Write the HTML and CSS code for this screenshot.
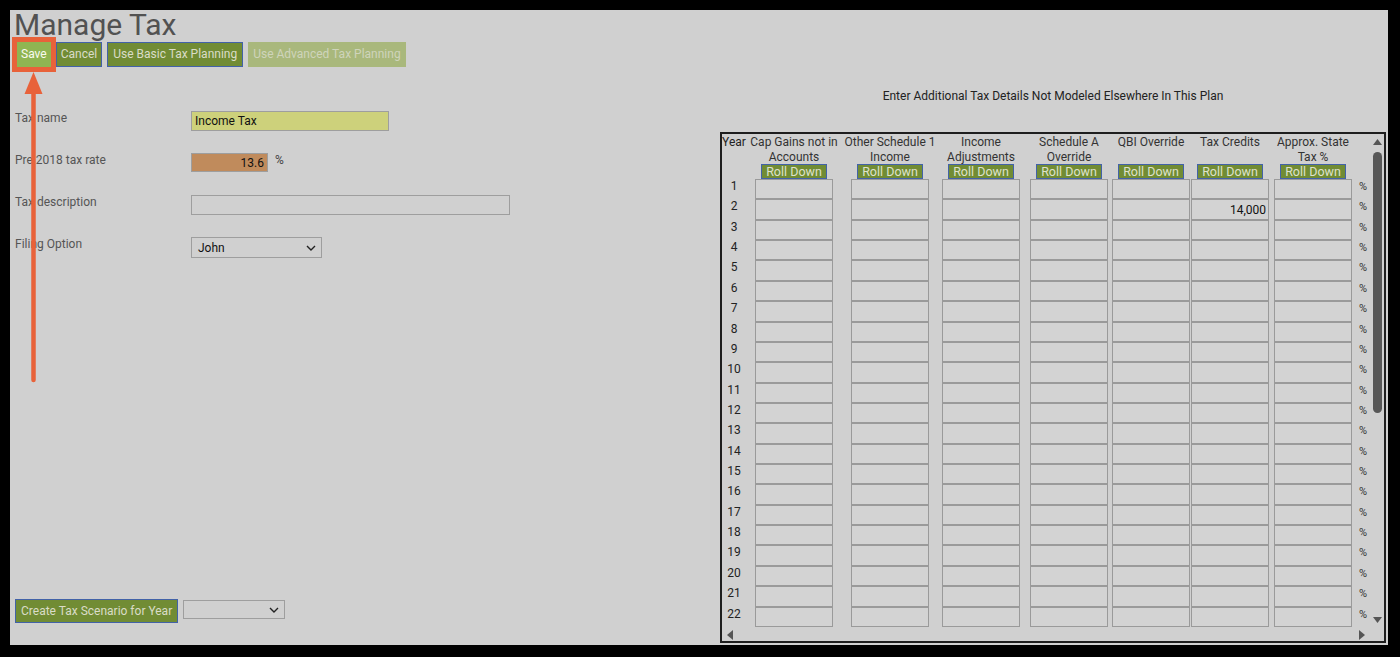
FILE: index.html
```html
<!DOCTYPE html>
<html lang="en">
<head>
<meta charset="utf-8">
<title>Manage Tax</title>
<link rel="stylesheet" href="styles.css">
</head>
<body>
<div class="page">
  <h1 class="title">Manage Tax</h1>
  <div class="toolbar">
    <button class="btn btn-save">Save</button>
    <button class="btn">Cancel</button>
    <button class="btn btn-wide">Use Basic Tax Planning</button>
    <button class="btn btn-disabled">Use Advanced Tax Planning</button>
  </div>
  <div class="main">
    <div class="left">
      <div class="form">
        <div class="lbl">Tax name</div>
        <div class="field"><input class="inp inp-name" value="Income Tax"></div>
        <div class="lbl">Pre 2018 tax rate</div>
        <div class="field"><input class="inp inp-rate" value="13.6"><span class="unit">%</span></div>
        <div class="lbl">Tax description</div>
        <div class="field"><input class="inp inp-desc" value=""></div>
        <div class="lbl">Filing Option</div>
        <div class="field"><div class="sel sel-filing"><span>John</span><svg class="chev" viewBox="0 0 10 6" width="10" height="6"><path d="M1 1 L5 5 L9 1" fill="none" stroke="#222" stroke-width="1.4"/></svg></div></div>
      </div>
      <div class="create-row">
        <button class="btn btn-wide btn-create">Create Tax Scenario for Year</button>
        <div class="sel sel-year"><span></span><svg class="chev" viewBox="0 0 10 6" width="10" height="6"><path d="M1 1 L5 5 L9 1" fill="none" stroke="#222" stroke-width="1.4"/></svg></div>
      </div>
    </div>
    <div class="right">
      <div class="heading">Enter Additional Tax Details Not Modeled Elsewhere In This Plan</div>
      <div class="gridbox">
        <div class="viewport">
          <table class="tbl">
            <colgroup>
              <col class="w-yr"><col class="w-c1"><col class="w-c2"><col class="w-c3"><col class="w-c4"><col class="w-c5"><col class="w-c6"><col class="w-c7"><col class="w-pct">
            </colgroup>
            <thead>
              <tr>
                <th class="yr"><div class="yr-head">Year</div></th>
                <th class="c1"><div class="ch"><div class="ch-text">Cap Gains not in<br>Accounts</div><button class="roll">Roll Down</button></div></th>
                <th class="c2"><div class="ch"><div class="ch-text">Other Schedule 1<br>Income</div><button class="roll">Roll Down</button></div></th>
                <th class="c3"><div class="ch"><div class="ch-text">Income<br>Adjustments</div><button class="roll">Roll Down</button></div></th>
                <th class="c4"><div class="ch"><div class="ch-text">Schedule A<br>Override</div><button class="roll">Roll Down</button></div></th>
                <th class="c5"><div class="ch"><div class="ch-text">QBI Override</div><button class="roll">Roll Down</button></div></th>
                <th class="c6"><div class="ch"><div class="ch-text">Tax Credits</div><button class="roll">Roll Down</button></div></th>
                <th class="c7"><div class="ch"><div class="ch-text">Approx. State<br>Tax %</div><button class="roll">Roll Down</button></div></th>
                <th class="pct"></th>
              </tr>
            </thead>
            <tbody>
              <tr><td class="yr">1</td><td class="c1"><input class="cell"></td><td class="c2"><input class="cell"></td><td class="c3"><input class="cell"></td><td class="c4"><input class="cell"></td><td class="c5"><input class="cell"></td><td class="c6"><input class="cell"></td><td class="c7"><input class="cell"></td><td class="pct">%</td></tr>
              <tr><td class="yr">2</td><td class="c1"><input class="cell"></td><td class="c2"><input class="cell"></td><td class="c3"><input class="cell"></td><td class="c4"><input class="cell"></td><td class="c5"><input class="cell"></td><td class="c6"><input class="cell" value="14,000"></td><td class="c7"><input class="cell"></td><td class="pct">%</td></tr>
              <tr><td class="yr">3</td><td class="c1"><input class="cell"></td><td class="c2"><input class="cell"></td><td class="c3"><input class="cell"></td><td class="c4"><input class="cell"></td><td class="c5"><input class="cell"></td><td class="c6"><input class="cell"></td><td class="c7"><input class="cell"></td><td class="pct">%</td></tr>
              <tr><td class="yr">4</td><td class="c1"><input class="cell"></td><td class="c2"><input class="cell"></td><td class="c3"><input class="cell"></td><td class="c4"><input class="cell"></td><td class="c5"><input class="cell"></td><td class="c6"><input class="cell"></td><td class="c7"><input class="cell"></td><td class="pct">%</td></tr>
              <tr><td class="yr">5</td><td class="c1"><input class="cell"></td><td class="c2"><input class="cell"></td><td class="c3"><input class="cell"></td><td class="c4"><input class="cell"></td><td class="c5"><input class="cell"></td><td class="c6"><input class="cell"></td><td class="c7"><input class="cell"></td><td class="pct">%</td></tr>
              <tr><td class="yr">6</td><td class="c1"><input class="cell"></td><td class="c2"><input class="cell"></td><td class="c3"><input class="cell"></td><td class="c4"><input class="cell"></td><td class="c5"><input class="cell"></td><td class="c6"><input class="cell"></td><td class="c7"><input class="cell"></td><td class="pct">%</td></tr>
              <tr><td class="yr">7</td><td class="c1"><input class="cell"></td><td class="c2"><input class="cell"></td><td class="c3"><input class="cell"></td><td class="c4"><input class="cell"></td><td class="c5"><input class="cell"></td><td class="c6"><input class="cell"></td><td class="c7"><input class="cell"></td><td class="pct">%</td></tr>
              <tr><td class="yr">8</td><td class="c1"><input class="cell"></td><td class="c2"><input class="cell"></td><td class="c3"><input class="cell"></td><td class="c4"><input class="cell"></td><td class="c5"><input class="cell"></td><td class="c6"><input class="cell"></td><td class="c7"><input class="cell"></td><td class="pct">%</td></tr>
              <tr><td class="yr">9</td><td class="c1"><input class="cell"></td><td class="c2"><input class="cell"></td><td class="c3"><input class="cell"></td><td class="c4"><input class="cell"></td><td class="c5"><input class="cell"></td><td class="c6"><input class="cell"></td><td class="c7"><input class="cell"></td><td class="pct">%</td></tr>
              <tr><td class="yr">10</td><td class="c1"><input class="cell"></td><td class="c2"><input class="cell"></td><td class="c3"><input class="cell"></td><td class="c4"><input class="cell"></td><td class="c5"><input class="cell"></td><td class="c6"><input class="cell"></td><td class="c7"><input class="cell"></td><td class="pct">%</td></tr>
              <tr><td class="yr">11</td><td class="c1"><input class="cell"></td><td class="c2"><input class="cell"></td><td class="c3"><input class="cell"></td><td class="c4"><input class="cell"></td><td class="c5"><input class="cell"></td><td class="c6"><input class="cell"></td><td class="c7"><input class="cell"></td><td class="pct">%</td></tr>
              <tr><td class="yr">12</td><td class="c1"><input class="cell"></td><td class="c2"><input class="cell"></td><td class="c3"><input class="cell"></td><td class="c4"><input class="cell"></td><td class="c5"><input class="cell"></td><td class="c6"><input class="cell"></td><td class="c7"><input class="cell"></td><td class="pct">%</td></tr>
              <tr><td class="yr">13</td><td class="c1"><input class="cell"></td><td class="c2"><input class="cell"></td><td class="c3"><input class="cell"></td><td class="c4"><input class="cell"></td><td class="c5"><input class="cell"></td><td class="c6"><input class="cell"></td><td class="c7"><input class="cell"></td><td class="pct">%</td></tr>
              <tr><td class="yr">14</td><td class="c1"><input class="cell"></td><td class="c2"><input class="cell"></td><td class="c3"><input class="cell"></td><td class="c4"><input class="cell"></td><td class="c5"><input class="cell"></td><td class="c6"><input class="cell"></td><td class="c7"><input class="cell"></td><td class="pct">%</td></tr>
              <tr><td class="yr">15</td><td class="c1"><input class="cell"></td><td class="c2"><input class="cell"></td><td class="c3"><input class="cell"></td><td class="c4"><input class="cell"></td><td class="c5"><input class="cell"></td><td class="c6"><input class="cell"></td><td class="c7"><input class="cell"></td><td class="pct">%</td></tr>
              <tr><td class="yr">16</td><td class="c1"><input class="cell"></td><td class="c2"><input class="cell"></td><td class="c3"><input class="cell"></td><td class="c4"><input class="cell"></td><td class="c5"><input class="cell"></td><td class="c6"><input class="cell"></td><td class="c7"><input class="cell"></td><td class="pct">%</td></tr>
              <tr><td class="yr">17</td><td class="c1"><input class="cell"></td><td class="c2"><input class="cell"></td><td class="c3"><input class="cell"></td><td class="c4"><input class="cell"></td><td class="c5"><input class="cell"></td><td class="c6"><input class="cell"></td><td class="c7"><input class="cell"></td><td class="pct">%</td></tr>
              <tr><td class="yr">18</td><td class="c1"><input class="cell"></td><td class="c2"><input class="cell"></td><td class="c3"><input class="cell"></td><td class="c4"><input class="cell"></td><td class="c5"><input class="cell"></td><td class="c6"><input class="cell"></td><td class="c7"><input class="cell"></td><td class="pct">%</td></tr>
              <tr><td class="yr">19</td><td class="c1"><input class="cell"></td><td class="c2"><input class="cell"></td><td class="c3"><input class="cell"></td><td class="c4"><input class="cell"></td><td class="c5"><input class="cell"></td><td class="c6"><input class="cell"></td><td class="c7"><input class="cell"></td><td class="pct">%</td></tr>
              <tr><td class="yr">20</td><td class="c1"><input class="cell"></td><td class="c2"><input class="cell"></td><td class="c3"><input class="cell"></td><td class="c4"><input class="cell"></td><td class="c5"><input class="cell"></td><td class="c6"><input class="cell"></td><td class="c7"><input class="cell"></td><td class="pct">%</td></tr>
              <tr><td class="yr">21</td><td class="c1"><input class="cell"></td><td class="c2"><input class="cell"></td><td class="c3"><input class="cell"></td><td class="c4"><input class="cell"></td><td class="c5"><input class="cell"></td><td class="c6"><input class="cell"></td><td class="c7"><input class="cell"></td><td class="pct">%</td></tr>
              <tr><td class="yr">22</td><td class="c1"><input class="cell"></td><td class="c2"><input class="cell"></td><td class="c3"><input class="cell"></td><td class="c4"><input class="cell"></td><td class="c5"><input class="cell"></td><td class="c6"><input class="cell"></td><td class="c7"><input class="cell"></td><td class="pct">%</td></tr>
            </tbody>
          </table>
        </div>
        <div class="vscroll">
          <svg class="arr arr-up" viewBox="0 0 9 6" width="9" height="6"><path d="M4.5 0 L9 6 L0 6 Z" fill="#555"/></svg>
          <div class="thumb"></div>
          <svg class="arr arr-down" viewBox="0 0 9 6" width="9" height="6"><path d="M0 0 L9 0 L4.5 6 Z" fill="#555"/></svg>
        </div>
        <div class="hscroll">
          <svg class="arr arr-left" viewBox="0 0 6 10" width="6" height="10"><path d="M6 0 L6 10 L0 5 Z" fill="#555"/></svg>
          <svg class="arr arr-right" viewBox="0 0 6 10" width="6" height="10"><path d="M0 0 L6 5 L0 10 Z" fill="#555"/></svg>
        </div>
        <div class="corner"></div>
      </div>
    </div>
  </div>
  <svg class="annot-arrow" viewBox="0 0 20 313" width="20" height="313">
    <line x1="9.5" y1="20" x2="9.5" y2="309" stroke="#e8623a" stroke-width="4.5" stroke-linecap="round"/>
    <path d="M9.5 1 L18.5 23 L0.5 23 Z" fill="#e8623a"/>
  </svg>
</div>
</body>
</html>
```

FILE: styles.css
```css
html, body {
  margin: 0;
  padding: 0;
  background: #000;
}

body {
  font-family: Roboto, "Liberation Sans", Arial, sans-serif;
  font-size: 12px;
  color: #555;
}

.page {
  position: relative;
  margin: 10px 12px 12px 10px;
  width: 1378px;
  height: 635px;
  background: #d0d0d0;
  display: flex;
  flex-direction: column;
}

.title {
  margin: 0;
  padding-left: 4px;
  font-size: 30px;
  line-height: 30px;
  font-weight: 400;
  color: #525252;
}

.toolbar {
  display: flex;
  gap: 5px;
  margin-top: 2px;
  padding-left: 7px;
}

.btn {
  height: 25px;
  padding: 0 4px;
  margin: 0;
  border: 1px solid #4262a8;
  background: #718c34;
  color: #dadcc8;
  font-family: Roboto, "Liberation Sans", Arial, sans-serif;
  font-size: 12px;
  line-height: 23px;
  cursor: pointer;
}

.btn-wide {
  padding: 0 5px;
}

.btn-save {
  padding: 0 3px;
  background: #8fb552;
  border-color: #8fb552;
  color: #fafaf0;
  outline: 5px solid #e8623a;
}

.btn-disabled {
  background: #a9b87c;
  border-color: #a9b87c;
  color: #cfd4bb;
}

.main {
  flex: 1;
  display: flex;
  min-height: 0;
}

.left {
  width: 710px;
  padding-left: 5px;
  box-sizing: border-box;
  display: flex;
  flex-direction: column;
}

.form {
  margin-top: 44px;
  display: grid;
  grid-template-columns: 176px 1fr;
  grid-auto-rows: 42px;
  align-items: start;
}

.lbl {
  line-height: 15px;
  color: #555;
}

.field {
  display: flex;
  align-items: flex-start;
}

.inp {
  box-sizing: border-box;
  margin: 0;
  border: 1px solid #9e9e9e;
  background: #d0d0d0;
  font-family: Roboto, "Liberation Sans", Arial, sans-serif;
  font-size: 12px;
  color: #111;
  padding: 0 3px;
}

.inp-name {
  width: 198px;
  height: 20px;
  background: #cdd17b;
}

.inp-rate {
  width: 77px;
  height: 19px;
  background: #c08b5c;
  text-align: right;
}

.unit {
  margin-left: 7px;
  line-height: 14px;
  color: #444;
}

.inp-desc {
  width: 319px;
  height: 20px;
}

.sel {
  position: relative;
  box-sizing: border-box;
  border: 1px solid #9e9e9e;
  background: #d0d0d0;
  color: #111;
  font-size: 12px;
  display: flex;
  align-items: center;
  padding-left: 6px;
}

.sel-filing {
  width: 131px;
  height: 21px;
}

.chev {
  position: absolute;
  right: 5px;
  top: 50%;
  margin-top: -3px;
}

.create-row {
  margin-top: auto;
  margin-bottom: 22px;
  display: flex;
  align-items: flex-start;
  gap: 5px;
}

.btn-create {
  height: 24px;
  line-height: 22px;
}

.sel-year {
  margin-top: 1px;
  width: 102px;
  height: 19px;
}

.right {
  width: 666px;
  margin-right: 2px;
  padding-top: 22px;
  box-sizing: border-box;
  display: flex;
  flex-direction: column;
}

.heading {
  text-align: center;
  line-height: 15px;
  color: #222;
}

.gridbox {
  margin-top: 28px;
  height: 511px;
  box-sizing: border-box;
  border: 2px solid #1e1e1e;
  display: grid;
  grid-template-columns: 1fr 14px;
  grid-template-rows: 1fr 14px;
}

.viewport {
  overflow: hidden;
}

.tbl {
  table-layout: fixed;
  border-collapse: collapse;
  border-spacing: 0;
  width: 648px;
}

.w-yr { width: 31px; }
.w-c1 { width: 89px; }
.w-c2 { width: 93px; }
.w-c3 { width: 90px; }
.w-c4 { width: 85px; }
.w-c5 { width: 80px; }
.w-c6 { width: 81px; }
.w-c7 { width: 83px; }
.w-pct { width: 16px; }

.tbl th,
.tbl td {
  padding: 0;
  vertical-align: top;
  font-weight: 400;
  color: #333;
  line-height: 15px;
}

.tbl thead th {
  height: 45px;
}

.yr-head {
  padding-top: 1px;
}

.tbl tbody tr {
  height: 20.36px;
}

.tbl .yr {
  text-align: center;
  padding-right: 7px;
  color: #222;
}

.tbl .c1 { padding-left: 2px; }
.tbl .c2 { padding-left: 9px; }
.tbl .c3 { padding-left: 7px; }
.tbl .c4 { padding-left: 5px; }
.tbl .c5 { padding-left: 2px; }
.tbl .c6 { padding-left: 1px; }
.tbl .c7 { padding-left: 3px; }

.tbl .pct {
  padding-left: 5px;
  font-size: 11px;
  color: #333;
}

.ch {
  width: 78px;
  height: 45px;
  padding-top: 1px;
  box-sizing: border-box;
  display: flex;
  flex-direction: column;
  align-items: center;
}

.ch-text {
  height: 29px;
  line-height: 14.5px;
  white-space: nowrap;
  text-align: center;
  color: #333;
}

.roll {
  width: 66px;
  height: 15px;
  margin: 0;
  padding: 0;
  border: 1px solid #4262a8;
  background: #718c34;
  color: #dfe2cc;
  font-family: Roboto, "Liberation Sans", Arial, sans-serif;
  font-size: 12.5px;
  line-height: 13px;
}

.cell {
  display: block;
  box-sizing: border-box;
  width: 78px;
  height: 20.36px;
  margin: 0;
  padding: 0 2px;
  border: 1px solid #9a9a9a;
  background: #d3d3d3;
  font-family: Roboto, "Liberation Sans", Arial, sans-serif;
  font-size: 12px;
  color: #111;
  text-align: right;
}

.vscroll {
  display: flex;
  flex-direction: column;
  padding-left: 3px;
}

.arr {
  display: block;
}

.arr-up {
  margin-top: 5px;
}

.thumb {
  margin-top: 7px;
  width: 9px;
  height: 261px;
  border-radius: 5px;
  background: #575757;
}

.arr-down {
  margin-top: auto;
  margin-bottom: 4px;
}

.hscroll {
  display: flex;
  align-items: flex-start;
  padding: 3px 5px 0 5px;
}

.arr-right {
  margin-left: auto;
}

.annot-arrow {
  position: absolute;
  left: 14px;
  top: 61px;
}
```
